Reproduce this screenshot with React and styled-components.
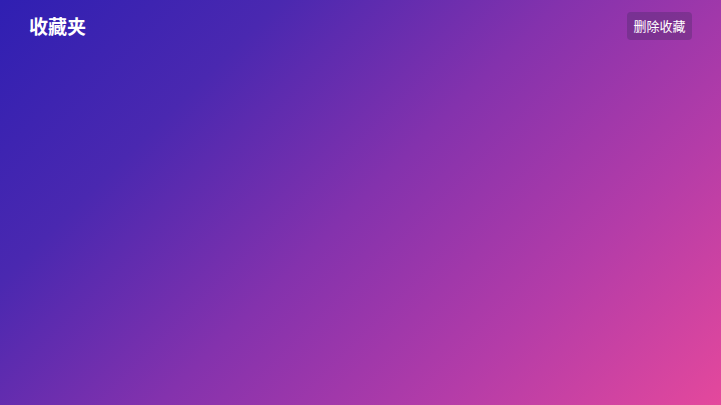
import React from "react";
import styled, { createGlobalStyle } from "styled-components";

const GlobalStyle = createGlobalStyle`
  html, body, #root {
    margin: 0;
    padding: 0;
    height: 100%;
  }
  body {
    font-family: "Noto Sans CJK SC", "Noto Sans", sans-serif;
  }
`;

const Page = styled.div`
  height: 100vh;
  box-sizing: border-box;
  background: linear-gradient(
    135deg,
    #2f1fb2 0%,
    #4a28b0 25%,
    #8432ad 50%,
    #b43ca8 75%,
    #e4489c 100%
  );
  color: #fff;
`;

const Header = styled.header`
  display: flex;
  align-items: center;
  justify-content: space-between;
  padding: 12px 29px 0 29px;
`;

const Title = styled.h1`
  margin: 0;
  font-size: 19px;
  font-weight: 700;
  line-height: 28px;
`;

const Button = styled.button`
  border: none;
  border-radius: 4px;
  background: rgba(60, 40, 90, 0.3);
  color: #fff;
  font-family: inherit;
  font-size: 13px;
  line-height: 18px;
  padding: 5px 6.5px;
  cursor: pointer;
`;

export default function App() {
  return (
    <>
      <GlobalStyle />
      <Page>
        <Header>
          <Title>收藏夹</Title>
          <Button>删除收藏</Button>
        </Header>
      </Page>
    </>
  );
}
